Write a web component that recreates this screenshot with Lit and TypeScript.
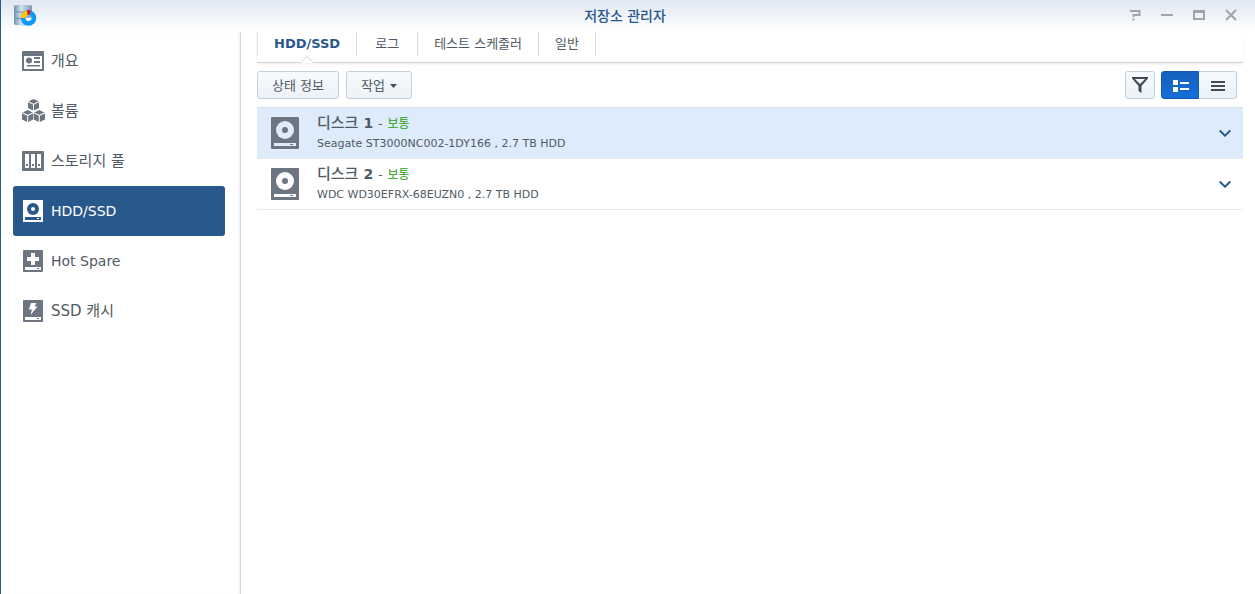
import { LitElement, html, css, svg } from "lit";
import { customElement, property, state } from "lit/decorators.js";
import { classMap } from "lit/directives/class-map.js";

const navIcons: Record<string, unknown> = {
  overview: svg`
    <rect x="0" y="1" width="22" height="20" rx="1" fill="currentColor"/>
    <rect x="2" y="6" width="18" height="13" fill="#fff"/>
    <circle cx="7" cy="10.5" r="3" fill="currentColor"/>
    <path d="M12 7h6v2h-6zM12 11h6v2h-6zM5 15h13v1.500H5z" fill="currentColor"/>`,
  volume: svg`
    <g fill="currentColor">
      <path d="M11.500-1 16.500 1.300 11.500 3.700 6.500 1.300z"/>
      <path d="M6 2.200 11 4.600V10.500L6 8z"/>
      <path d="M17 2.200 12 4.600V10.500L17 8z"/>
      <path d="M5.700 10 10.700 12.400 5.700 14.800.7 12.400z"/>
      <path d="M0 13.300 5.200 15.800V22L0 19.400z"/>
      <path d="M11.200 13.300 6.200 15.800V22L11.200 19.400z"/>
      <path d="M17.300 10 22.300 12.400 17.300 14.800 12.300 12.400z"/>
      <path d="M11.800 13.300 16.800 15.800V22L11.800 19.400z"/>
      <path d="M23 13.300 17.800 15.800V22L23 19.400z"/>
    </g>`,
  pool: svg`
    <rect x="0" y="1" width="22" height="20" rx="1" fill="currentColor"/>
    <path d="M3 4h4v14H3zM9 4h4v14H9zM15 4h4v14h-4z" fill="#fff"/>
    <path d="M4 14h2v2H4zM10 14h2v2h-2zM16 14h2v2h-2z" fill="currentColor"/>`,
  disk: svg`
    <rect x="1" width="20" height="22" fill="currentColor"/>
    <circle cx="11" cy="9" r="6" fill="#29588c"/>
    <circle cx="11" cy="9" r="2" fill="#fff"/>
    <path d="M3 17h16v3H3z" fill="#29588c"/>
    <path d="M15 18h2v1h-2z" fill="#fff"/>`,
  spare: svg`
    <rect x="1" width="20" height="22" rx="1" fill="currentColor"/>
    <path d="M9 3h4v4h4v4h-4v4H9v-4H5V7h4z" fill="#fff"/>
    <path d="M3 17h16v3H3z" fill="#fff"/>
    <path d="M15 18h2v1h-2z" fill="currentColor"/>`,
  cache: svg`
    <rect x="1" width="20" height="22" rx="1" fill="currentColor"/>
    <path d="M9 3H14.500l-2 3.500h3L8.500 15l1.500-5.500H7z" fill="#fff"/>
    <path d="M3 17h16v3H3z" fill="#fff"/>
    <path d="M15 18h2v1h-2z" fill="currentColor"/>`,
};

const sections = [
  { id: "overview", label: "개요", ko: true },
  { id: "volume", label: "볼륨", ko: true },
  { id: "pool", label: "스토리지 풀", ko: true },
  { id: "disk", label: "HDD/SSD", ko: false },
  { id: "spare", label: "Hot Spare", ko: false },
  { id: "cache", label: "SSD 캐시", ko: true },
];

const tabs = ["HDD/SSD", "로그", "테스트 스케줄러", "일반"];

const disks = [
  { number: 1, status: "보통", model: "Seagate ST3000NC002-1DY166 , 2.7 TB HDD" },
  { number: 2, status: "보통", model: "WDC WD30EFRX-68EUZN0 , 2.7 TB HDD" },
];

const base = css`
  * {
    box-sizing: border-box;
  }
  button {
    font: inherit;
    color: inherit;
    margin: 0;
    padding: 0;
    border: 0;
    background: none;
    cursor: pointer;
  }
  svg {
    display: block;
    flex: none;
  }
`;

@customElement("window-header")
class WindowHeader extends LitElement {
  static styles = [
    base,
    css`
      :host {
        display: grid;
        grid-template-columns: 1fr auto 1fr;
        align-items: center;
        height: 32px;
        padding: 0 18px 0 12px;
        background: linear-gradient(#e0e7f1, #fff);
      }
      .title {
        margin: 0;
        font-size: 14px;
        line-height: 20px;
        font-weight: 500;
        color: #29588c;
      }
      .controls {
        display: flex;
        justify-content: flex-end;
        gap: 20px;
        padding-bottom: 2px;
      }
    `,
  ];

  render() {
    return html`
      <svg width="24" height="24" viewBox="0 0 24 24" aria-hidden="true">
        <defs>
          <linearGradient id="metal">
            <stop offset="0" stop-color="#6f93b3"/>
            <stop offset=".4" stop-color="#d3e2ee"/>
            <stop offset="1" stop-color="#7898b4"/>
          </linearGradient>
        </defs>
        <path d="M1 1.500Q10 0 19 1.500V20Q10 23 1 20.500z" fill="url(#metal)"/>
        <path d="M1 7.500q9 1.500 18 0M1 14q9 1.500 18 0" fill="none" stroke="#7290a8"/>
        <circle cx="15.500" cy="14" r="5.300" fill="none" stroke="#0d9aff" stroke-width="5"/>
        <path d="M15.500 14H7.700a8 8 0 0 1 6.300-7.600z" fill="#ffc400"/>
        <path d="M15.500 14 14 6.300q2.200-.6 4 .2z" fill="#dc1226"/>
        <circle cx="15.500" cy="14" r="3" fill="#8fb2cd"/>
        <path d="M12.500 14h6a3 3 0 0 1-6 0z" fill="#eef5fb"/>
      </svg>
      <h1 class="title">저장소 관리자</h1>
      <div class="controls">
        <button aria-label="도움말">
          <svg width="12" height="12" viewBox="0 0 12 12"><path d="M1 2h9.500v4H4.500v2M4.500 9.500v2" fill="none" stroke="#9fa5ac" stroke-width="2"/></svg>
        </button>
        <button aria-label="최소화">
          <svg width="12" height="12" viewBox="0 0 12 12"><path d="M0 6h12" stroke="#9fa5ac" stroke-width="2"/></svg>
        </button>
        <button aria-label="최대화">
          <svg width="12" height="12" viewBox="0 0 12 12"><path d="M0 1h12v10H0zM2 4v5h8V4z" fill="#9fa5ac" fill-rule="evenodd"/></svg>
        </button>
        <button aria-label="닫기">
          <svg width="12" height="12" viewBox="0 0 12 12"><path d="M1 1l10 10M11 1 1 11" stroke="#9fa5ac" stroke-width="2"/></svg>
        </button>
      </div>
    `;
  }
}

@customElement("side-nav")
class SideNav extends LitElement {
  @property() current = "disk";

  static styles = [
    base,
    css`
      :host {
        display: block;
        padding: 4px 15px 0 12px;
        border-right: 1px solid #d9dbdd;
        box-shadow: inset -2px 0 1px #f5f5f6;
      }
      .list {
        display: flex;
        flex-direction: column;
      }
      .item {
        display: flex;
        align-items: center;
        gap: 7px;
        height: 50px;
        padding: 0 9px;
        border-radius: 3px;
        color: #6c7580;
        text-decoration: none;
        font-size: 14px;
        line-height: 20px;
      }
      .label {
        color: #505a64;
      }
      .ko {
        font-size: 15px;
      }
      .current {
        background: #29588c;
        color: #fff;
      }
      .current .label {
        color: #fff;
      }
    `,
  ];

  render() {
    return html`
      <nav class="list">
        ${sections.map(
          (s) => html`
            <a class=${classMap({ item: true, current: s.id === this.current })} href="#${s.id}">
              <svg width="22" height="22" viewBox="0 0 22 22" overflow="visible" aria-hidden="true">${navIcons[s.id]}</svg>
              <span class=${classMap({ label: true, ko: s.ko })}>${s.label}</span>
            </a>
          `
        )}
      </nav>
    `;
  }
}

@customElement("disk-row")
class DiskRow extends LitElement {
  @property({ type: Object }) disk = disks[0];
  @property({ type: Boolean, reflect: true }) selected = false;

  static styles = [
    base,
    css`
      :host {
        display: flex;
        align-items: center;
        height: 51px;
        padding: 0 12px 0 14px;
        border-bottom: 1px solid #e8eaec;
        --hole: #fff;
      }
      :host([selected]) {
        background: #deebfb;
        --hole: #deebfb;
      }
      .info {
        flex: 1;
        min-width: 0;
        padding-left: 18px;
        color: #505a64;
      }
      .name {
        display: flex;
        align-items: baseline;
        gap: 5px;
        margin: 0;
        font-size: 14px;
        line-height: 20px;
      }
      .word {
        font-size: 15px;
        font-weight: 500;
      }
      .dash {
        font-size: 12px;
        font-weight: 400;
      }
      .status {
        font-size: 12px;
        font-weight: 400;
        color: #28a010;
      }
      .model {
        margin: 0;
        font-size: 11px;
        line-height: 20px;
      }
      .hole {
        fill: var(--hole);
      }
    `,
  ];

  render() {
    return html`
      <svg width="28" height="32" viewBox="0 0 28 32" aria-hidden="true">
        <rect width="28" height="32" rx="1" fill="#6c7580"/>
        <circle class="hole" cx="14" cy="13" r="9"/>
        <circle cx="14" cy="13" r="3" fill="#6c7580"/>
        <path class="hole" d="M3 26h22v3H3z"/>
        <path d="M19 27h3v1h-3z" fill="#6c7580"/>
      </svg>
      <div class="info">
        <h2 class="name">
          <span class="word">디스크</span><span>${this.disk.number}</span><span class="dash">-</span><span class="status">${this.disk.status}</span>
        </h2>
        <p class="model">${this.disk.model}</p>
      </div>
      <button aria-label="세부 정보">
        <svg width="12" height="12" viewBox="0 0 12 12"><path d="M.7 3.500 6 8.700l5.300-5.200" fill="none" stroke="#29588c" stroke-width="2"/></svg>
      </button>
    `;
  }
}

@customElement("app-root")
class AppRoot extends LitElement {
  @state() private tab = 0;
  @state() private selected = 0;

  static styles = [
    base,
    css`
      :host {
        display: flex;
        flex-direction: column;
        min-height: 100vh;
        box-sizing: border-box;
        border-left: 1px solid #29588c;
        background: #fff;
        color: #505a64;
        font-family: "DejaVu Sans", "Noto Sans CJK KR", sans-serif;
        font-size: 13px;
      }
      .body {
        flex: 1;
        display: grid;
        grid-template-columns: 240px 1fr;
      }
      .content {
        padding: 0 12px 0 16px;
        min-width: 0;
      }
      .tabs {
        display: flex;
        height: 31px;
        border-bottom: 1px solid #d2d5d8;
        box-shadow: 0 2px 2px #f3f3f4;
      }
      .tab {
        position: relative;
        height: 24px;
        padding: 0 16px;
        min-width: 61px;
        border-right: 1px solid #d3dde8;
        line-height: 20px;
      }
      .tab:first-child {
        border-left: 1px solid #d3dde8;
      }
      .tab:last-child {
        min-width: 57px;
      }
      .active {
        font-weight: 700;
        color: #29588c;
      }
      .notch {
        position: absolute;
        left: 50%;
        top: 24px;
        margin-left: -7px;
      }
      .toolbar {
        display: flex;
        align-items: center;
        justify-content: space-between;
        padding: 8px 6px 8px 0;
      }
      .group {
        display: flex;
        gap: 7px;
      }
      .tools {
        gap: 6px;
      }
      .button {
        display: flex;
        align-items: center;
        justify-content: center;
        gap: 5px;
        height: 28px;
        padding: 2px 14px 0;
        border: 1px solid #c3d0dd;
        border-radius: 3px;
        background: linear-gradient(#f6fafd, #ecf2f7);
        line-height: 20px;
      }
      .filter {
        width: 30px;
        padding: 0;
      }
      .views {
        display: flex;
      }
      .view {
        width: 38px;
        padding: 2px 0 0;
        border-left: 0;
        border-radius: 0 3px 3px 0;
      }
      .view:first-child {
        padding: 2px 0 0 2px;
        border: 1px solid #1059b5;
        border-radius: 3px 0 0 3px;
        background: linear-gradient(#1560bd, #156ed8);
      }
      .disks {
        border-top: 1px solid #d0dce9;
      }
    `,
  ];

  render() {
    return html`
      <window-header></window-header>
      <div class="body">
        <side-nav current="disk"></side-nav>
        <main class="content">
          <div class="tabs" role="tablist">
            ${tabs.map(
              (label, i) => html`
                <button
                  class=${classMap({ tab: true, active: i === this.tab })}
                  role="tab"
                  aria-selected=${i === this.tab}
                  @click=${() => (this.tab = i)}
                >
                  ${label}
                  ${i === this.tab
                    ? html`<svg class="notch" width="14" height="7" viewBox="0 0 14 7"><path d="M0 7 7 0l7 7z" fill="#fff"/><path d="M.5 6.500 7 .5l6.500 6" fill="none" stroke="#d2d5d8"/></svg>`
                    : null}
                </button>
              `
            )}
          </div>
          <div class="toolbar">
            <div class="group">
              <button class="button">상태 정보</button>
              <button class="button">
                작업
                <svg width="7" height="4" viewBox="0 0 7 4"><path d="M0 0h7L3.500 4z" fill="#414b55"/></svg>
              </button>
            </div>
            <div class="group tools">
              <button class="button filter" aria-label="필터">
                <svg width="16" height="16" viewBox="0 0 16 16"><path d="M0 0h16v1.500L9.500 9v7l-3-2V9L0 1.500zM3 2l5 5 5-5z" fill="#414b55" fill-rule="evenodd"/></svg>
              </button>
              <div class="views">
                <button class="button view" aria-label="자세히 보기" aria-pressed="true">
                  <svg width="16" height="12" viewBox="0 0 16 12"><path d="M0 0h5v5H0zM0 7h5v5H0zM7 2h9v2H7zM7 8h9v2H7z" fill="#fff"/></svg>
                </button>
                <button class="button view" aria-label="목록 보기" aria-pressed="false">
                  <svg width="14" height="10" viewBox="0 0 14 10"><path d="M0 0h14v2H0zM0 4h14v2H0zM0 8h14v2H0z" fill="#414b55"/></svg>
                </button>
              </div>
            </div>
          </div>
          <div class="disks">
            ${disks.map(
              (d, i) => html`<disk-row .disk=${d} ?selected=${i === this.selected} @click=${() => (this.selected = i)}></disk-row>`
            )}
          </div>
        </main>
      </div>
    `;
  }
}
